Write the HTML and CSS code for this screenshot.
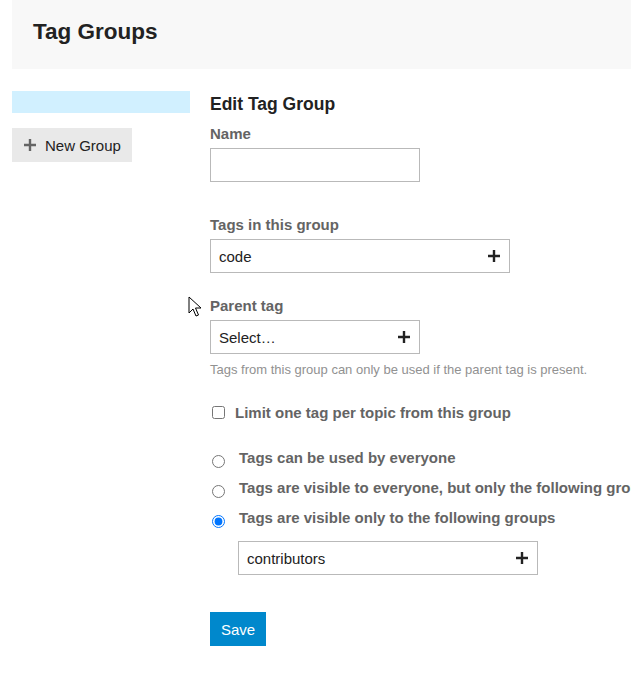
FILE: index.html
```html
<!DOCTYPE html>
<html lang="en">
<head>
<meta charset="UTF-8">
<meta name="viewport" content="width=device-width, initial-scale=1.0">
<title>Tag Groups</title>
<link rel="stylesheet" href="styles.css">
</head>
<body>
<div id="page">
  <div class="page-header">
    <h1>Tag Groups</h1>
  </div>

  <div class="layout">
    <div class="sidebar">
      <div class="group-item active"></div>
      <button class="btn-new">
        <svg class="plus" viewBox="0 0 12 12" width="12" height="12"><path d="M6 0v12M0 6h12" stroke="#646464" stroke-width="2.4"/></svg>
        New Group
      </button>
    </div>

    <div class="main">
      <h2>Edit Tag Group</h2>

      <div class="field first">
        <label class="field-label">Name</label>
        <input type="text" class="text-input">
      </div>

      <div class="field">
        <label class="field-label">Tags in this group</label>
        <div class="chooser wide">
          <span>code</span>
          <svg class="plus" viewBox="0 0 12 12" width="12" height="12"><path d="M6 0v12M0 6h12" stroke="#222" stroke-width="2.4"/></svg>
        </div>
      </div>

      <div class="field parent">
        <label class="field-label">Parent tag</label>
        <div class="chooser">
          <span>Select…</span>
          <svg class="plus" viewBox="0 0 12 12" width="12" height="12"><path d="M6 0v12M0 6h12" stroke="#222" stroke-width="2.4"/></svg>
        </div>
        <p class="help">Tags from this group can only be used if the parent tag is present.</p>
      </div>

      <label class="check-row">
        <input type="checkbox">
        <span>Limit one tag per topic from this group</span>
      </label>

      <div class="radios">
        <label class="radio-row"><input type="radio" name="perm"><span>Tags can be used by everyone</span></label>
        <label class="radio-row"><input type="radio" name="perm"><span>Tags are visible to everyone, but only the following groups can use them</span></label>
        <label class="radio-row"><input type="radio" name="perm" checked><span>Tags are visible only to the following groups</span></label>
        <div class="chooser wide groups">
          <span>contributors</span>
          <svg class="plus" viewBox="0 0 12 12" width="12" height="12"><path d="M6 0v12M0 6h12" stroke="#222" stroke-width="2.4"/></svg>
        </div>
      </div>

      <button class="btn-save">Save</button>
    </div>
  </div>

  <svg class="cursor" width="14" height="22" viewBox="0 0 14 22"><path d="M1 1v16l4-4 3 7 2.5-1-3-7h5.5z" fill="#fff" stroke="#000" stroke-width="1"/></svg>
</div>
</body>
</html>
```

FILE: styles.css
```css
body {
  margin: 0;
  font-family: "Liberation Sans", Arial, sans-serif;
  color: #222;
  background: #fff;
  overflow: hidden;
}
#page {
  position: relative;
  padding-left: 12px;
  width: 640px;
  overflow: hidden;
}
.page-header {
  background-color: #f8f8f8;
  height: 69px;
  display: flex;
  align-items: center;
  padding-left: 21px;
}
h1 {
  font-size: 22.5px;
  margin: 0 0 5px;
  font-weight: bold;
}
.layout {
  display: flex;
  gap: 20px;
  margin-top: 22px;
}
.sidebar {
  width: 178px;
  flex-shrink: 0;
}
.group-item {
  height: 22px;
}
.group-item.active {
  background-color: #d1f0ff;
}
.btn-new {
  margin-top: 15px;
  height: 34px;
  display: flex;
  align-items: center;
  gap: 9px;
  padding: 0 11px 0 12px;
  background: #e9e9e9;
  border: none;
  font-family: inherit;
  font-size: 15px;
  color: #222;
}
.main {
  flex: 1;
  min-width: 0;
}
h2 {
  font-size: 17.5px;
  margin: 3px 0 0;
  line-height: 20px;
}
.field {
  margin-top: 34px;
}
.field.first {
  margin-top: 11px;
}
.field.parent {
  margin-top: 24px;
}
.field-label {
  display: block;
  font-size: 15px;
  font-weight: bold;
  color: #646464;
  line-height: 17px;
  margin-bottom: 6px;
}
.text-input {
  display: block;
  box-sizing: border-box;
  width: 210px;
  height: 34px;
  border: 1px solid #b9b9b9;
  margin: 0;
}
.chooser {
  box-sizing: border-box;
  width: 210px;
  height: 34px;
  border: 1px solid #b9b9b9;
  display: flex;
  align-items: center;
  justify-content: space-between;
  padding: 0 9px 0 8px;
  font-size: 15px;
  color: #222;
}
.chooser.wide {
  width: 300px;
}
.help {
  margin: 8px 0 0;
  font-size: 13px;
  line-height: 15px;
  color: #919191;
}
.check-row {
  display: flex;
  align-items: center;
  gap: 10px;
  margin-top: 27px;
  font-size: 15px;
  font-weight: bold;
  color: #646464;
}
.check-row input {
  margin: 0 0 0 2px;
  width: 13px;
  height: 13px;
}
.radios {
  margin-top: 28px;
}
.radio-row {
  display: flex;
  align-items: flex-start;
  gap: 14px;
  height: 30px;
  font-size: 15px;
  font-weight: bold;
  color: #646464;
  white-space: nowrap;
}
.radio-row input {
  margin: 6px 0 0 2px;
  width: 13px;
  height: 13px;
}
.chooser.groups {
  margin-left: 28px;
  margin-top: 2px;
}
.btn-save {
  margin-top: 37px;
  height: 34px;
  padding: 0 11px;
  background: #0088cc;
  color: #fff;
  border: none;
  font-family: inherit;
  font-size: 15px;
}
.cursor {
  position: absolute;
  left: 188px;
  top: 296px;
}
```
